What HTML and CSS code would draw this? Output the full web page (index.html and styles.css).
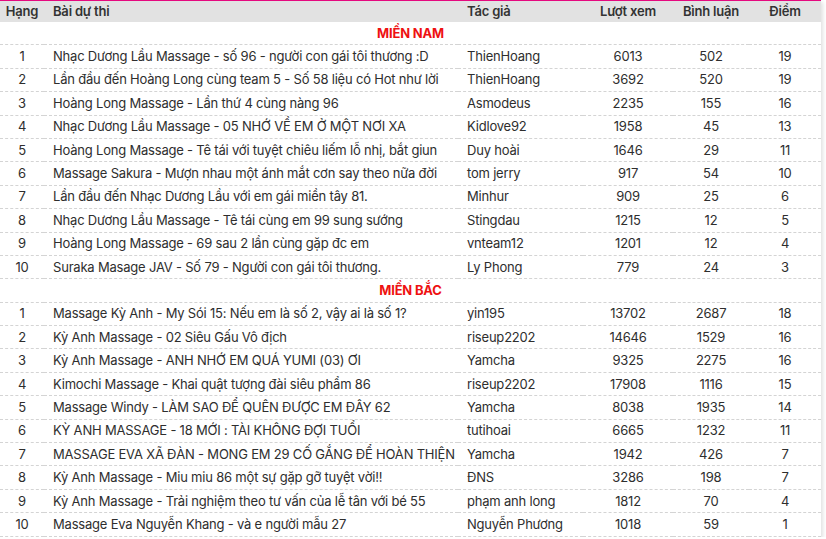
FILE: index.html
```html
<!DOCTYPE html>
<html lang="vi">
<head>
<meta charset="utf-8">
<title>Bảng xếp hạng</title>
<link rel="stylesheet" href="styles.css">
</head>
<body>
<div class="board">
<table class="rank-table">
<colgroup>
<col class="c-rank"><col class="c-title"><col class="c-author"><col class="c-views"><col class="c-comments"><col class="c-points">
</colgroup>
<thead>
<tr><th class="center">Hạng</th><th>Bài dự thi</th><th>Tác giả</th><th class="center">Lượt xem</th><th class="center">Bình luận</th><th class="center">Điểm</th></tr>
</thead>
<tbody>
<tr class="section"><td colspan="6">MIỀN NAM</td></tr>
<tr><td class="center">1</td><td>Nhạc Dương Lầu Massage - số 96 - người con gái tôi thương :D</td><td>ThienHoang</td><td class="center">6013</td><td class="center">502</td><td class="center">19</td></tr>
<tr><td class="center">2</td><td>Lần đầu đến Hoàng Long cùng team 5 - Số 58 liệu có Hot như lời</td><td>ThienHoang</td><td class="center">3692</td><td class="center">520</td><td class="center">19</td></tr>
<tr><td class="center">3</td><td>Hoàng Long Massage - Lần thứ 4 cùng nàng 96</td><td>Asmodeus</td><td class="center">2235</td><td class="center">155</td><td class="center">16</td></tr>
<tr><td class="center">4</td><td>Nhạc Dương Lầu Massage - 05 NHỚ VỀ EM Ở MỘT NƠI XA</td><td>Kidlove92</td><td class="center">1958</td><td class="center">45</td><td class="center">13</td></tr>
<tr><td class="center">5</td><td>Hoàng Long Massage - Tê tái với tuyệt chiêu liếm lỗ nhị, bắt giun</td><td>Duy hoài</td><td class="center">1646</td><td class="center">29</td><td class="center">11</td></tr>
<tr><td class="center">6</td><td>Massage Sakura - Mượn nhau một ánh mắt cơn say theo nữa đời</td><td>tom jerry</td><td class="center">917</td><td class="center">54</td><td class="center">10</td></tr>
<tr><td class="center">7</td><td>Lần đầu đến Nhạc Dương Lầu với em gái miền tây 81.</td><td>Minhur</td><td class="center">909</td><td class="center">25</td><td class="center">6</td></tr>
<tr><td class="center">8</td><td>Nhạc Dương Lầu Massage - Tê tái cùng em 99 sung sướng</td><td>Stingdau</td><td class="center">1215</td><td class="center">12</td><td class="center">5</td></tr>
<tr><td class="center">9</td><td>Hoàng Long Massage - 69 sau 2 lần cùng gặp đc em</td><td>vnteam12</td><td class="center">1201</td><td class="center">12</td><td class="center">4</td></tr>
<tr><td class="center">10</td><td>Suraka Masage JAV - Số 79 - Người con gái tôi thương.</td><td>Ly Phong</td><td class="center">779</td><td class="center">24</td><td class="center">3</td></tr>
<tr class="section"><td colspan="6">MIỀN BẮC</td></tr>
<tr><td class="center">1</td><td>Massage Kỳ Anh - My Sói 15: Nếu em là số 2, vậy ai là số 1?</td><td>yin195</td><td class="center">13702</td><td class="center">2687</td><td class="center">18</td></tr>
<tr><td class="center">2</td><td>Kỳ Anh Massage - 02 Siêu Gấu Vô địch</td><td>riseup2202</td><td class="center">14646</td><td class="center">1529</td><td class="center">16</td></tr>
<tr><td class="center">3</td><td>Kỳ Anh Massage - ANH NHỚ EM QUÁ YUMI (03) ƠI</td><td>Yamcha</td><td class="center">9325</td><td class="center">2275</td><td class="center">16</td></tr>
<tr><td class="center">4</td><td>Kimochi Massage - Khai quật tượng đài siêu phẩm 86</td><td>riseup2202</td><td class="center">17908</td><td class="center">1116</td><td class="center">15</td></tr>
<tr><td class="center">5</td><td>Massage Windy - LÀM SAO ĐỂ QUÊN ĐƯỢC EM ĐÂY 62</td><td>Yamcha</td><td class="center">8038</td><td class="center">1935</td><td class="center">14</td></tr>
<tr><td class="center">6</td><td>KỲ ANH MASSAGE - 18 MỚI : TÀI KHÔNG ĐỢI TUỔI</td><td>tutihoai</td><td class="center">6665</td><td class="center">1232</td><td class="center">11</td></tr>
<tr><td class="center">7</td><td>MASSAGE EVA XÃ ĐÀN - MONG EM 29 CỐ GẮNG ĐỂ HOÀN THIỆN</td><td>Yamcha</td><td class="center">1942</td><td class="center">426</td><td class="center">7</td></tr>
<tr><td class="center">8</td><td>Kỳ Anh Massage - Miu miu 86 một sự gặp gỡ tuyệt vời!!</td><td>ĐNS</td><td class="center">3286</td><td class="center">198</td><td class="center">7</td></tr>
<tr><td class="center">9</td><td>Kỳ Anh Massage - Trải nghiệm theo tư vấn của lễ tân với bé 55</td><td>phạm anh long</td><td class="center">1812</td><td class="center">70</td><td class="center">4</td></tr>
<tr><td class="center">10</td><td>Massage Eva Nguyễn Khang - và e người mẫu 27</td><td>Nguyễn Phương</td><td class="center">1018</td><td class="center">59</td><td class="center">1</td></tr>
</tbody>
</table>
</div>
</body>
</html>
```
FILE: styles.css
```css
html, body {
  margin: 0;
  padding: 0;
  background: #ffffff;
}
body {
  font-family: "Inter", "Noto Sans", sans-serif;
  color: #2e2e2e;
}
.board {
  width: 821px;
  border-top: 1px solid #e5097f;
  box-shadow: 2px 2px 4px rgba(0, 0, 0, 0.12);
  background: #fff;
}
.rank-table {
  width: 100%;
  border-collapse: collapse;
  table-layout: fixed;
  font-size: 13px;
  letter-spacing: -0.2px;
}
.c-rank { width: 44px; }
.c-title { width: 414px; }
.c-author { width: 125px; }
.c-views { width: 90px; }
.c-comments { width: 76px; }
.c-points { width: 72px; }
.rank-table th {
  background: #e2e2e2;
  font-weight: 600;
  text-align: left;
  height: 21px;
  padding: 0 9px;
  line-height: 21px;
  color: #333;
}
.rank-table td {
  height: 22.4px;
  padding: 0 9px;
  line-height: 19px;
  border-bottom: 1px dashed #d4d4d4;
  white-space: nowrap;
  overflow: hidden;
}
.rank-table .center {
  text-align: center;
  padding: 0;
}
.section td {
  text-align: center;
  color: #ee1111;
  font-weight: 700;
}
```
